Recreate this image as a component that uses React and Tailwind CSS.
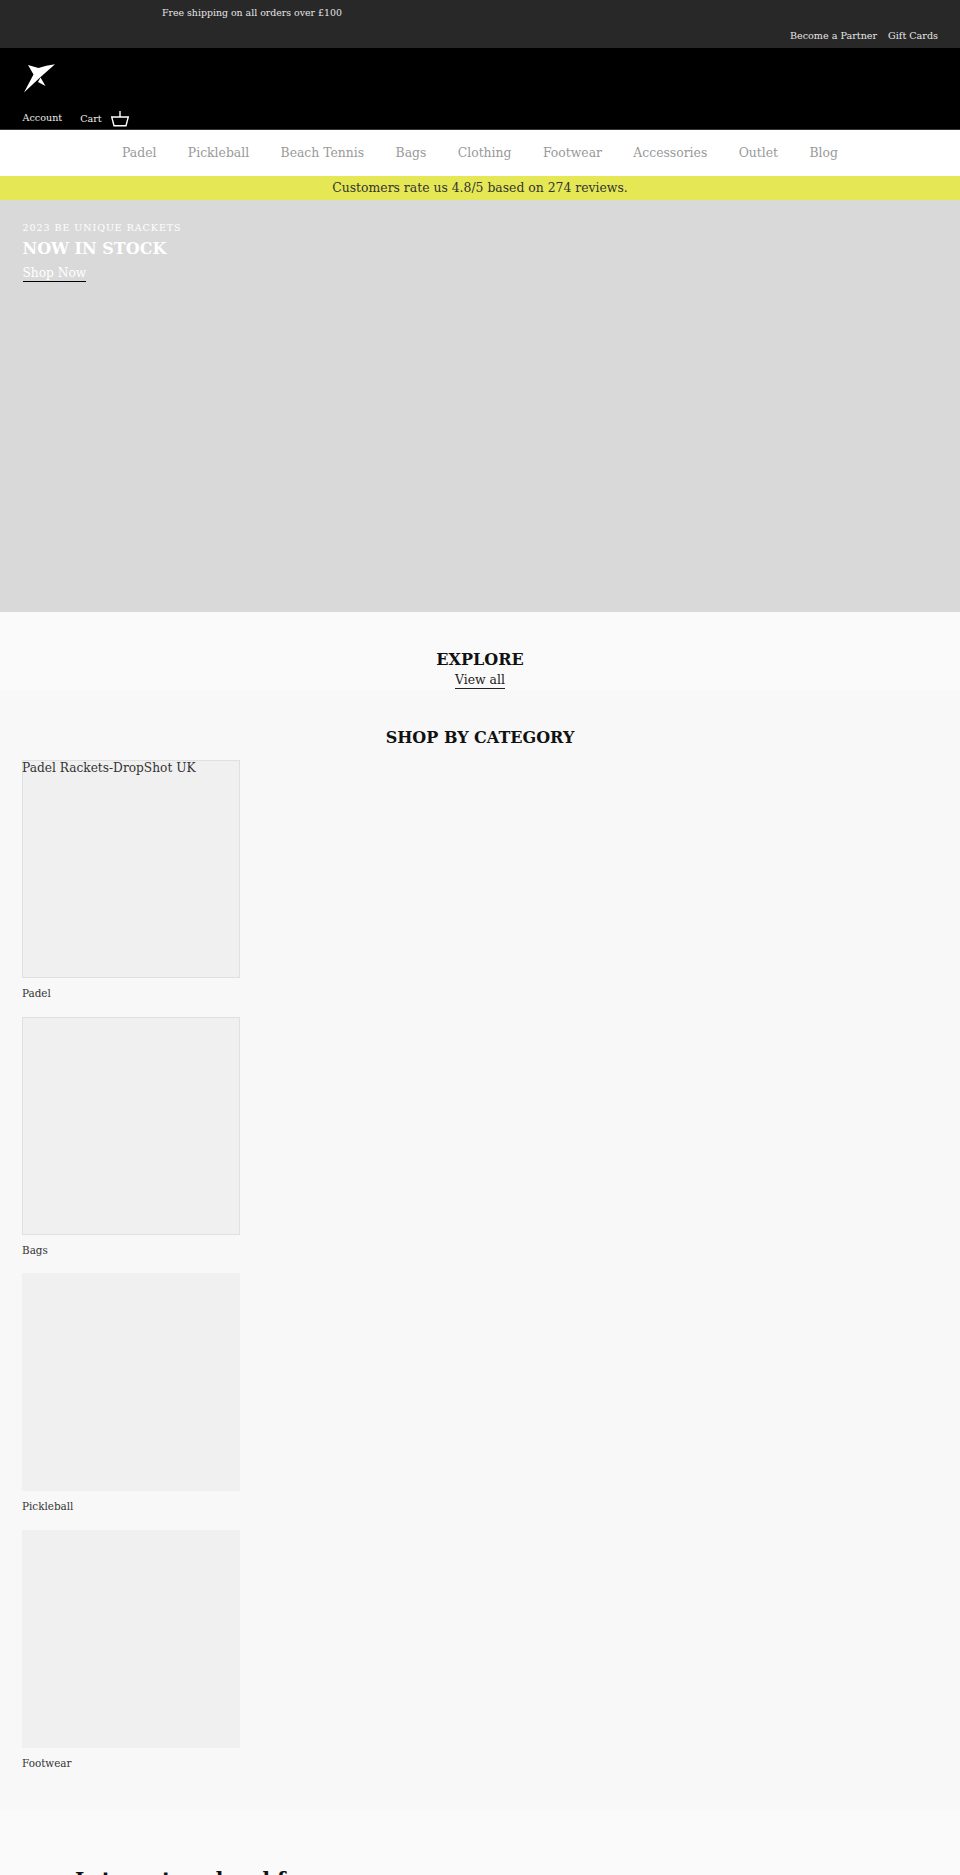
const serif = "font-['DejaVu_Serif','Liberation_Serif',serif]";

function Logo() {
  return (
    <svg width="32" height="29" viewBox="0 0 32 29" className="block">
      <path d="M0 28.5 L9.5 10.5 L4 1 L14.5 4 Q22 1.5 31 0.3 L16 13.5 Z" fill="#fff" />
      <path d="M16.5 13.5 L21.5 22 L14 18 Z" fill="#fff" />
    </svg>
  );
}

function Basket() {
  return (
    <svg width="18" height="16" viewBox="0 0 18 16" fill="none" stroke="#fff" strokeWidth="1.4" className="block">
      <path d="M9 0V6M0.7 6H17.3L15 14.8H3Z" />
    </svg>
  );
}

const nav = ["Padel", "Pickleball", "Beach Tennis", "Bags", "Clothing", "Footwear", "Accessories", "Outlet", "Blog"];
const cats = ["Padel", "Bags", "Pickleball", "Footwear"];

export default function App() {
  return (
    <div className={`${serif} h-[1875px] w-[960px] overflow-hidden bg-[#fafafa] text-[#222]`}>
      <div className="relative h-12 bg-[#282828] text-[9.4px] text-[#e6e6e6]">
        <p className="pl-[162px] pt-[5.5px] leading-[14px]">Free shipping on all orders over £100</p>
        <div className="absolute right-[22px] top-[29px] flex gap-[11px] text-[9.6px] leading-[14px]">
          <span>Become a Partner</span>
          <span>Gift Cards</span>
        </div>
      </div>
      <header className="h-[82px] border-b border-[#333] bg-black text-[9.6px] text-[#eee]">
        <div className="pl-6 pt-4"><Logo /></div>
        <div className="flex items-end pl-[22.5px] pt-[18px]">
          <span className="mb-[1px] leading-[14px]">Account</span>
          <span className="ml-[18px] leading-[14px]">Cart</span>
          <span className="-mb-[1px] ml-[9px]"><Basket /></span>
        </div>
      </header>
      <nav className="flex h-[46px] items-center justify-center gap-[31.4px] bg-white text-[12.4px] text-[#999]">
        {nav.map((n) => <span key={n}>{n}</span>)}
      </nav>
      <div className="h-6 bg-[#e5e854] text-center text-[12.4px] leading-6 text-[#333]">Customers rate us 4.8/5 based on 274 reviews.</div>
      <section className="h-[412px] bg-[#d9d9d9] pl-[22.5px] pt-[21px] text-white">
        <p className="text-[9.5px] leading-[14px] tracking-[0.1em]">2023 BE UNIQUE RACKETS</p>
        <h2 className="mt-[4px] text-base font-bold leading-5">NOW IN STOCK</h2>
        <a className="mt-[6px] block w-fit border-b border-black text-[12.2px] leading-[16px]">Shop Now</a>
      </section>
      <section className="h-[78px] pt-[38px] text-center">
        <h2 className="text-base font-bold leading-5 text-[#111]">EXPLORE</h2>
        <a className="mx-auto mt-[2px] block w-fit border-b border-[#222] text-[12.4px] leading-[16px]">View all</a>
      </section>
      <section className="h-[1120px] bg-[#f8f8f8] pt-[38px]">
        <h2 className="text-center text-base font-bold leading-5 text-[#111]">SHOP BY CATEGORY</h2>
        <div className="mt-3 flex flex-col gap-[16.5px] px-[22px]">
          {cats.map((c) => (
            <div key={c}>
              <div className={`h-[218px] w-[218px] bg-[#f0f0f0] ${c === "Padel" || c === "Bags" ? "border border-[#e0e0e0]" : ""}`}>
                {c === "Padel" && <span className="-ml-px block whitespace-nowrap text-[12.2px] leading-[14px] text-[#333]">Padel Rackets-DropShot UK</span>}
              </div>
              <p className="mt-[8px] text-[10.4px] leading-[14px] text-[#333]">{c}</p>
            </div>
          ))}
        </div>
      </section>
      <h2 className="pl-[75px] pt-[56px] text-[20px] font-bold leading-7 text-[#111]">Let us stay ahead for you</h2>
    </div>
  );
}
